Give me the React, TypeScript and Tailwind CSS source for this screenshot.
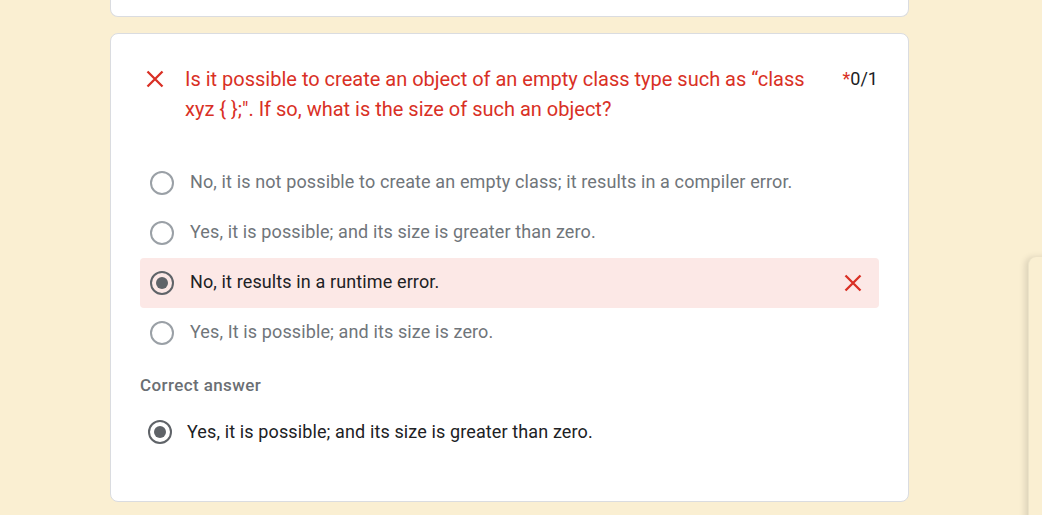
import React from 'react';

const font = { fontFamily: 'Roboto, "Noto Sans", Arial, sans-serif' };

function Cross({ className }: { className?: string }) {
  return (
    <svg viewBox="0 0 18 18" className={className} fill="none">
      <path d="M1.5 1.5L16.5 16.5M16.5 1.5L1.5 16.5" stroke="#d93025" strokeWidth="2.3" />
    </svg>
  );
}

function Radio({ checked }: { checked?: boolean }) {
  return (
    <span
      className={`flex h-6 w-6 shrink-0 items-center justify-center rounded-full border-2 ${
        checked ? 'border-[#5f6368]' : 'border-[#9aa0a6]'
      }`}
    >
      {checked && <span className="h-3 w-3 rounded-full bg-[#5f6368]" />}
    </span>
  );
}

const options = [
  { text: 'No, it is not possible to create an empty class; it results in a compiler error.' },
  { text: 'Yes, it is possible; and its size is greater than zero.' },
  { text: 'No, it results in a runtime error.', picked: true },
  { text: 'Yes, It is possible; and its size is zero.' },
];

export default function App() {
  return (
    <div className="relative h-[515px] w-full overflow-hidden bg-[#faefd2]" style={font}>
      {/* previous card, mostly scrolled off */}
      <div className="ml-[110px] h-[17px] w-[799px] rounded-b-lg border border-t-0 border-[#dadce0] bg-white" />

      {/* question card */}
      <div className="ml-[110px] mt-4 flex h-[469px] w-[799px] flex-col rounded-lg border border-[#dadce0] bg-white px-[29px] pt-[30px]">
        <div className="flex items-start">
          <Cross className="ml-[6px] mt-[6px] h-[18px] w-[18px] shrink-0" />
          <p className="ml-[21px] w-[645px] text-[20px] leading-[30px] text-[#d93025]">
            Is it possible to create an object of an empty class type such as “class xyz {'{ };'}". If so, what is the size of such an object?
          </p>
          <div className="ml-auto mr-[1px] text-[18px] leading-[30px] text-[#202124]">
            <span className="text-[#d93025]">*</span>0/1
          </div>
        </div>

        <div className="mt-[34px] flex flex-col">
          {options.map((o) => (
            <div
              key={o.text}
              className={`flex h-[50px] items-center gap-4 rounded pl-[10px] pr-[17px] ${
                o.picked ? 'bg-[#fce8e6]' : ''
              }`}
            >
              <Radio checked={o.picked} />
              <span
                className={`-mt-[3px] text-[18px] tracking-[0.12px] ${
                  o.picked ? 'text-[#202124]' : 'text-[#70757a]'
                }`}
              >
                {o.text}
              </span>
              {o.picked && <Cross className="ml-auto h-[18px] w-[18px]" />}
            </div>
          ))}
        </div>

        <div className="mt-[15px] text-[17px] font-medium leading-6 tracking-[0.4px] text-[#6b6f74]">Correct answer</div>

        <div className="mt-[13px] flex h-[44px] items-center gap-[15px] pl-2">
          <Radio checked />
          <span className="-mt-[2px] text-[18px] tracking-[0.12px] text-[#202124]">
            Yes, it is possible; and its size is greater than zero.
          </span>
        </div>
      </div>

      {/* floating side panel edge */}
      <div className="absolute left-[1028px] top-[257px] h-[300px] w-[40px] rounded-tl-lg border-l border-[#ece3c8] bg-[#faefd2] shadow-[-3px_0_6px_rgba(0,0,0,0.12)]">
        <div className="absolute bottom-0 left-[-1px] h-[36px] w-[2px] bg-[#8a8a8a]" />
      </div>
    </div>
  );
}
